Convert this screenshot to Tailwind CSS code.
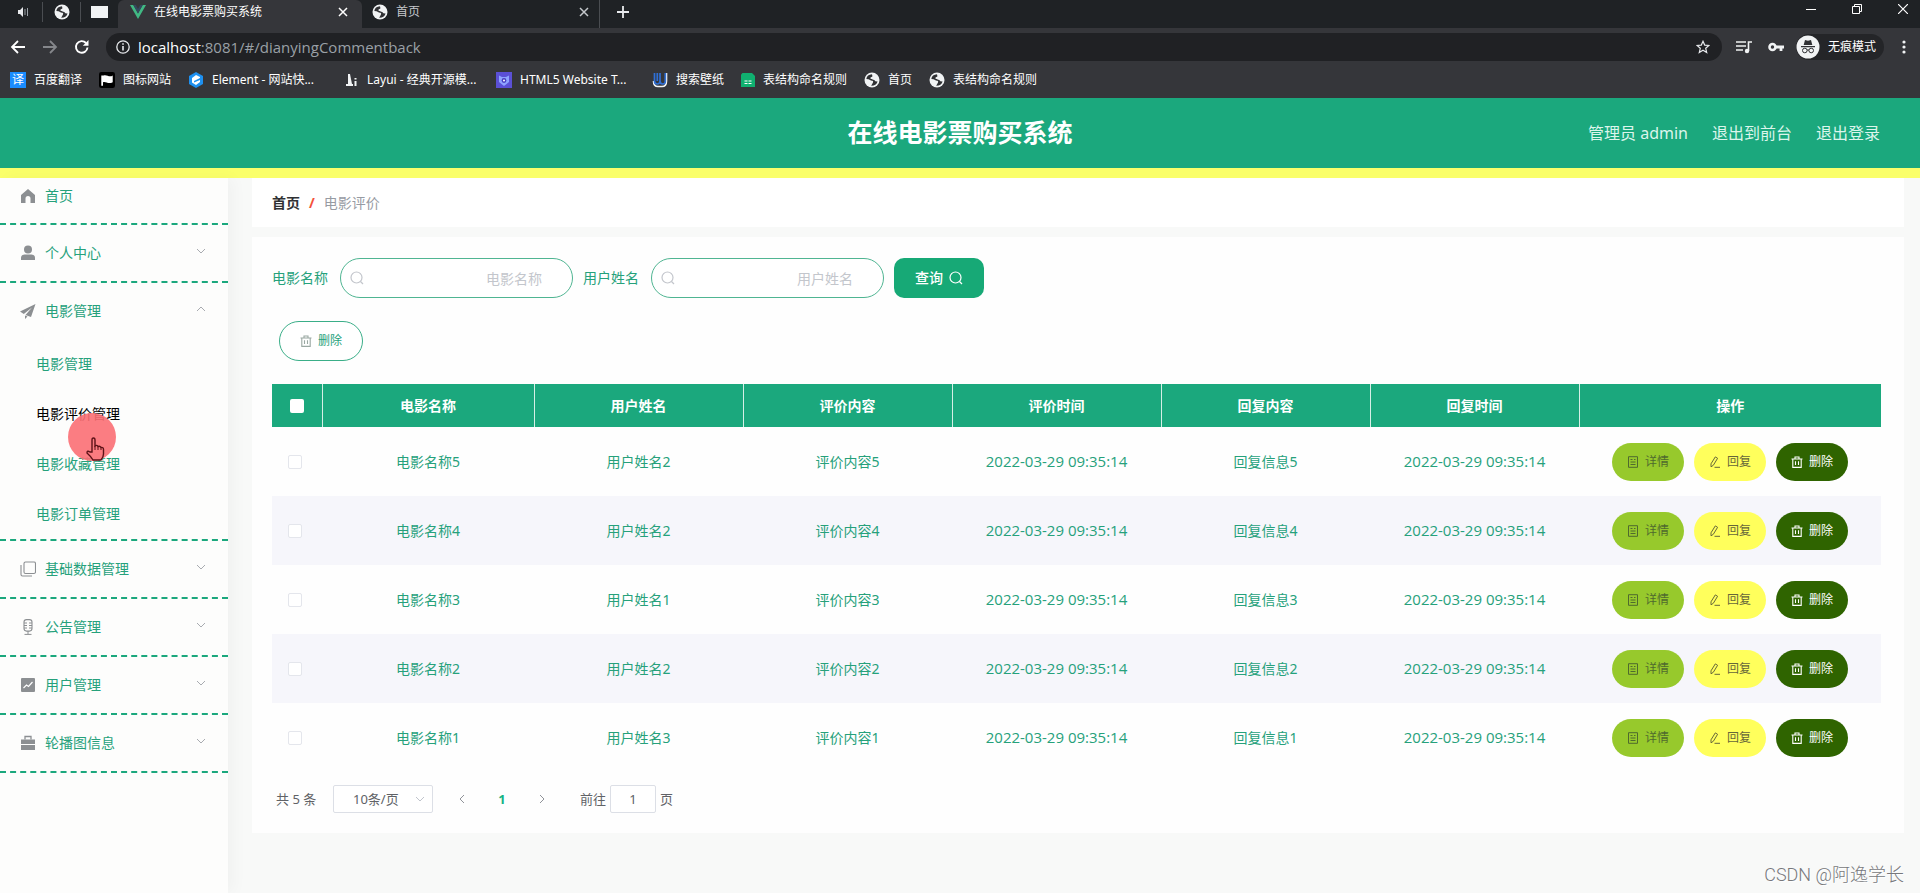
<!DOCTYPE html>
<html lang="zh-CN">
<head>
<meta charset="utf-8">
<title>在线电影票购买系统</title>
<script src="https://cdn.jsdelivr.net/npm/@tailwindcss/browser@4"></script>
</head>
<body class="flex min-h-screen flex-col bg-[#f8f9f8] font-['Noto_Sans','Noto_Sans_CJK_SC',sans-serif] text-sm text-[#26a17b]">

<svg class="hidden" aria-hidden="true">
  <symbol id="globe" viewBox="0 0 16 16"><circle cx="8" cy="8" r="7.5" fill="#f1f3f4"/><path d="M8 2.200Q3 2.500 2.300 7q2.700 0 3.700 1t2.500.8Q9.500 9 9 10.500L7.200 13.800Q12 14 13.600 9.500 11 9.600 10.300 8 9.500 6.500 7.500 7 6 7 6.500 5.500L8.500 4.500z" fill="#303134"/><path d="M7.500 5.500 9.500 4l3 2-2 2-2.500-.8zM3 8.500l2.500.5 1.500 2-.5 2.500Q3.500 12 3 8.500z" fill="#f1f3f4"/></symbol>
  <symbol id="search" viewBox="0 0 14 14"><circle cx="6.500" cy="6.500" r="5.500" fill="none" stroke="currentColor" stroke-width="1.200"/><path d="m10.500 10.500 2.500 2.500" stroke="currentColor" stroke-width="1.200"/></symbol>
  <symbol id="trash" viewBox="0 0 12 12"><path d="M.5 3h11M4 3V1h4v2M1.800 3v8.400h8.400V3M4.500 5.300v3.700M7.500 5.300v3.700" fill="none" stroke="currentColor" stroke-width="1.100"/></symbol>
  <symbol id="doc" viewBox="0 0 12 12"><path d="M1.500.7h9v10.600h-9zM3.500 3.500h2M3.500 6h5M3.500 8.500h5M7 3.500h1.500" fill="none" stroke="currentColor"/></symbol>
  <symbol id="edit" viewBox="0 0 12 12"><path d="M2 7.800 6.300.9l2.300 1.400-4.300 7L2 10.800zM5.500 11.300H11" fill="none" stroke="currentColor"/></symbol>
  <symbol id="down" viewBox="0 0 10 10"><path d="m1 3 4 4 4-4" fill="none" stroke="currentColor"/></symbol>
  <symbol id="x" viewBox="0 0 10 10"><path d="m1 1 8 8M9 1 1 9" stroke="currentColor" stroke-width="1.500"/></symbol>
</svg>

<!-- Browser window -->
<div class="bg-[#35363a] text-xs text-white">
  <div class="flex h-7 items-stretch bg-[#1f2225]">
    <div class="flex w-[118px] items-center pb-1 text-[#e8eaed]">
      <button class="flex w-[42px] justify-center pl-1" aria-label="静音"><svg class="size-3" viewBox="0 0 12 12"><path d="M1 4h2l3-3v10L3 8H1z" fill="currentColor"/><path d="M8 3v6M10.500 2v8" stroke="#9aa0a6"/></svg></button>
      <span class="h-5 w-px bg-[#4a4d51]"></span>
      <button class="flex flex-1 justify-center" aria-label="首页"><svg class="size-4"><use href="#globe"/></svg></button>
      <span class="h-5 w-px bg-[#4a4d51]"></span>
      <button class="flex flex-1 justify-center" aria-label="空白页"><span class="h-3 w-[17px] bg-[#f1f3f4]"></span></button>
    </div>
    <div class="flex w-[244px] items-center rounded-t-md bg-[#35363a] pr-2.5 pb-1 pl-3">
      <svg class="h-3.5 w-4 shrink-0" viewBox="0 0 16 14"><path d="M0 0h3.300L8 8.500 12.700 0H16L8 14z" fill="#41b883"/><path d="M3.300 0h2.500L8 4l2.200-4h2.500L8 8.500z" fill="#34495e"/></svg>
      <span class="ml-2 flex-1 truncate">在线电影票购买系统</span>
      <button class="p-1" aria-label="关闭标签"><svg class="size-2.5"><use href="#x"/></svg></button>
    </div>
    <div class="flex w-[238px] items-center border-r border-[#4a4d51] pr-1.5 pb-1 pl-2.5 text-[#c5c8cc]">
      <svg class="size-4 shrink-0"><use href="#globe"/></svg>
      <span class="ml-2 flex-1 truncate">首页</span>
      <button class="p-1" aria-label="关闭标签"><svg class="size-2.5"><use href="#x"/></svg></button>
    </div>
    <button class="px-4 pb-1" aria-label="新标签"><svg class="size-3.5" viewBox="0 0 14 14"><path d="M7 1v12M1 7h12" stroke="#e8eaed" stroke-width="1.800"/></svg></button>
    <div class="ml-auto flex items-center gap-9 pr-3 pb-2.5">
      <button aria-label="最小化"><svg class="size-2.5" viewBox="0 0 10 10"><path d="M0 5.500h10" stroke="#fff"/></svg></button>
      <button aria-label="还原"><svg class="size-2.5" viewBox="0 0 10 10"><path d="M.5 2.500h7v7h-7zM2.500 2.500v-2h7v7h-2" fill="none" stroke="#fff"/></svg></button>
      <button aria-label="关闭"><svg class="size-2.5" viewBox="0 0 10 10"><path d="m0 0 10 10M10 0 0 10" stroke="#fff" stroke-width="1.200"/></svg></button>
    </div>
  </div>
  <div class="flex h-[38px] items-center gap-4 px-2.5">
    <button aria-label="后退"><svg class="size-4" viewBox="0 0 16 16"><path d="M15 8H2M8 2 2 8l6 6" fill="none" stroke="#fff" stroke-width="1.800"/></svg></button>
    <button aria-label="前进"><svg class="size-4" viewBox="0 0 16 16"><path d="M1 8h13M8 2l6 6-6 6" fill="none" stroke="#85878b" stroke-width="1.800"/></svg></button>
    <button aria-label="刷新"><svg class="size-4" viewBox="0 0 16 16"><path d="M13.500 8.500A5.800 5.800 0 1 1 12 4" fill="none" stroke="#fff" stroke-width="1.900"/><path d="M14.500 1v5.800H8.800z" fill="#fff"/></svg></button>
    <div class="flex h-7 flex-1 items-center rounded-full bg-[#202124] pr-3 pl-2.5">
      <svg class="size-3.5" viewBox="0 0 14 14"><circle cx="7" cy="7" r="6.200" fill="none" stroke="#e8eaed" stroke-width="1.300"/><path d="M7 6v4.500M7 3.200v1.500" stroke="#e8eaed" stroke-width="1.600"/></svg>
      <span class="ml-2 flex-1 font-['Open_Sans'] text-[15px] text-[#9aa0a6]"><span class="text-white">localhost</span>:8081/#/dianyingCommentback</span>
      <button aria-label="收藏"><svg class="size-3.5" viewBox="0 0 14 14"><path d="m7 1.300 1.700 3.800 4.200.4-3.200 2.800 1 4.100L7 10.200l-3.700 2.200 1-4.100L1.100 5.500l4.200-.4z" fill="none" stroke="#e8eaed" stroke-width="1.200"/></svg></button>
    </div>
    <button class="-ml-0.5" aria-label="媒体"><svg class="h-3.5 w-4" viewBox="0 0 16 14"><path d="M0 2h10M0 6h10M0 10h7" stroke="#f1f3f4" stroke-width="1.600"/><path d="M12.500 11V2H16" fill="none" stroke="#f1f3f4" stroke-width="1.600"/><circle cx="11" cy="11" r="2.200" fill="#f1f3f4"/></svg></button>
    <button aria-label="密码"><svg class="h-3.5 w-4" viewBox="0 0 16 14"><circle cx="4.500" cy="7" r="3" fill="none" stroke="#f1f3f4" stroke-width="2.600"/><path d="M8 7h8M13 7v4" stroke="#f1f3f4" stroke-width="2.800"/></svg></button>
    <button class="-ml-1 flex h-[26px] items-center gap-2 rounded-full bg-[#242528] pr-2" aria-label="无痕模式">
      <svg class="size-6" viewBox="0 0 24 24"><circle cx="12" cy="12" r="11.500" fill="#f1f3f4"/><path d="M9 5l3 .8 3-.8 1.300 5H7.700zM5 11h14v1.200H5z" fill="#303134"/><circle cx="8.800" cy="15.500" r="2.300" fill="none" stroke="#303134"/><circle cx="15.200" cy="15.500" r="2.300" fill="none" stroke="#303134"/><path d="M11 15h2" stroke="#303134"/></svg>
      <span>无痕模式</span>
    </button>
    <button class="-ml-0.5 px-1" aria-label="菜单"><svg class="h-3.5 w-1" viewBox="0 0 4 14"><g fill="#f1f3f4"><circle cx="2" cy="2" r="1.600"/><circle cx="2" cy="7" r="1.600"/><circle cx="2" cy="12" r="1.600"/></g></svg></button>
  </div>
  <nav class="flex h-8 items-center gap-[17px] pb-1 pl-2.5" aria-label="书签">
    <a href="#" class="flex items-center gap-2"><span class="flex size-4 items-center justify-center bg-[#1a8cff] text-xs">译</span>百度翻译</a>
    <a href="#" class="flex items-center gap-2"><svg class="size-4" viewBox="0 0 14 14"><rect width="14" height="14" rx="2" fill="#000"/><path d="M2 3h2c3-1 5 2 8 0v6C8 11 6 8 3.500 9v3H2z" fill="#fff"/></svg>图标网站</a>
    <a href="#" class="flex w-[140px] items-center gap-2"><svg class="size-4 shrink-0" viewBox="0 0 16 16"><path d="m8 0 7 4v8l-7 4-7-4V4z" fill="#1e90f0"/><path d="M8 3 12 5v1L6 9v1.500l6-2.500v2L8 13l-4-2.500V6z" fill="#fff"/></svg><span class="whitespace-nowrap">Element - 网站快...</span></a>
    <a href="#" class="flex w-[134px] items-center gap-2"><svg class="size-3.5 shrink-0" viewBox="0 0 14 14"><path d="M3 1h2l2 10h1v2H1v-2h2zM9.500 5h2v1.500h-2zM9.500 8h2v5h-2z" fill="#f1f3f4"/></svg><span class="whitespace-nowrap">Layui - 经典开源模...</span></a>
    <a href="#" class="flex w-[139px] items-center gap-2"><svg class="size-4 shrink-0" viewBox="0 0 16 16"><rect width="16" height="16" fill="#5b50d6"/><path d="M3 3.500 6 5h4l3-1.500V10l-5 4-5-4z" fill="#8fa4ff"/><circle cx="8" cy="8.500" r="2.400" fill="#4a3fc0"/><circle cx="8" cy="8.500" r="1" fill="#fff"/></svg><span class="whitespace-nowrap">HTML5 Website T...</span></a>
    <a href="#" class="flex items-center gap-2"><svg class="size-4" viewBox="0 0 16 16"><path d="M1.500 9q0 5.500 4.500 5.500h4q4.500 0 4.500-5.500V1" fill="none" stroke="#f1f3f4" stroke-width="1.600"/><path d="M2.500 1v8q0 3 2.700 3T8 9V1M8 9q0 3 2.700 3t2.600-3V1M5.300 1v8" fill="none" stroke="#2f6fd6" stroke-width="1.700"/></svg>搜索壁纸</a>
    <a href="#" class="flex items-center gap-2"><svg class="size-3.5" viewBox="0 0 14 14"><path d="M1.500 0H11l3 3v11H0V1.500z" fill="#10b070"/><path d="M3.500 8h3M7.500 8h3M3.500 10.500h3M7.500 10.500h3" stroke="#fff" stroke-width="1.200"/></svg>表结构命名规则</a>
    <a href="#" class="flex items-center gap-2"><svg class="size-4"><use href="#globe"/></svg>首页</a>
    <a href="#" class="flex items-center gap-2"><svg class="size-4"><use href="#globe"/></svg>表结构命名规则</a>
  </nav>
</div>

<!-- Application header -->
<header class="grid h-20 grid-cols-[1fr_auto_1fr] items-center border-b-10 border-[#faff6a] bg-[#1ba87d] text-base text-[#dcf5ec]">
  <h1 class="col-start-2 text-[25px] font-bold text-white">在线电影票购买系统</h1>
  <div class="flex items-center justify-end gap-6 pr-10">
    <span>管理员 admin</span>
    <a href="#">退出到前台</a>
    <a href="#">退出登录</a>
  </div>
</header>

<div class="flex flex-1">
  <!-- Side menu -->
  <aside class="relative w-[228px] shrink-0 bg-[#fdfdfc] shadow-[6px_0_14px_#00000008]">
    <nav id="menu" aria-label="主菜单">
      <a href="#" class="flex h-[47px] items-center border-b-2 border-dashed border-[#1ba87d] pb-2.5 pl-5">
        <svg class="mr-[9px] size-4 text-[#8c8f92]" viewBox="0 0 16 16"><path d="M8 1 1 7v8h4.500v-4.500a2.500 2.500 0 0 1 5 0V15H15V7z" fill="currentColor"/></svg>首页</a>
      <button class="flex h-[58px] w-full items-center border-b-2 border-dashed border-[#1ba87d] pr-[22px] pl-5 text-left">
        <svg class="mr-[9px] size-4 text-[#8c8f92]" viewBox="0 0 16 16"><circle cx="8" cy="4.500" r="4" fill="currentColor"/><path d="M1 15v-2q0-3.500 3.500-3.500h7q3.500 0 3.500 3.500v2z" fill="currentColor"/></svg><span class="flex-1">个人中心</span><svg class="mb-1 size-2.5 text-[#a8abb0]"><use href="#down"/></svg></button>
      <div class="border-b-2 border-dashed border-[#1ba87d]">
        <button class="flex h-14 w-full items-center pr-[22px] pl-5 text-left" aria-expanded="true">
          <svg class="mr-[9px] size-4 text-[#8c8f92]" viewBox="0 0 16 16"><path d="M15.500 1 0 8.500 3.800 11 12 4.500 5.500 12l5.500 2zM5 12.500V16l2.500-2.600z" fill="currentColor"/></svg><span class="flex-1">电影管理</span><svg class="mb-1 size-2.5 rotate-180 text-[#a8abb0]"><use href="#down"/></svg></button>
        <a href="#" class="flex h-[50px] items-center pl-9">电影管理</a>
        <a href="#" class="flex h-[50px] items-center pl-9 text-black" aria-current="page">电影评价管理</a>
        <a href="#" class="flex h-[50px] items-center pl-9">电影收藏管理</a>
        <a href="#" class="flex h-[50px] items-center pl-9">电影订单管理</a>
      </div>
      <button class="flex h-[58px] w-full items-center border-b-2 border-dashed border-[#1ba87d] pr-[22px] pl-5 text-left">
        <svg class="mr-[9px] size-4 text-[#8c8f92]" viewBox="0 0 16 16"><rect x="4" y="1" width="11.500" height="11.500" rx="1.500" fill="none" stroke="currentColor" stroke-width="1.100"/><path d="M1 4v9.500q0 1.500 1.500 1.500H12" fill="none" stroke="currentColor" stroke-width="1.100"/></svg><span class="flex-1">基础数据管理</span><svg class="mb-1 size-2.5 text-[#a8abb0]"><use href="#down"/></svg></button>
      <button class="flex h-[58px] w-full items-center border-b-2 border-dashed border-[#1ba87d] pr-[22px] pl-5 text-left">
        <svg class="mr-[9px] size-4 text-[#8c8f92]" viewBox="0 0 16 16"><rect x="4" y=".6" width="8" height="11.500" rx="2.500" fill="none" stroke="currentColor" stroke-width="1.100"/><path d="M4 4h3M9 4h3M4 6.500h3M9 6.500h3M4 9h3M9 9h3M8 12v3M4.500 15.400h7" stroke="currentColor"/></svg><span class="flex-1">公告管理</span><svg class="mb-1 size-2.5 text-[#a8abb0]"><use href="#down"/></svg></button>
      <button class="flex h-[58px] w-full items-center border-b-2 border-dashed border-[#1ba87d] pr-[22px] pl-5 text-left">
        <svg class="mr-[9px] size-4 text-[#8c8f92]" viewBox="0 0 16 16"><rect x="1" y="1" width="14" height="14" rx="1" fill="currentColor"/><path d="m3.500 11 3-3 2 1.500 4-4.500" fill="none" stroke="#fff" stroke-width="1.200"/></svg><span class="flex-1">用户管理</span><svg class="mb-1 size-2.5 text-[#a8abb0]"><use href="#down"/></svg></button>
      <button class="flex h-[58px] w-full items-center border-b-2 border-dashed border-[#1ba87d] pr-[22px] pl-5 text-left">
        <svg class="mr-[9px] size-4 text-[#8c8f92]" viewBox="0 0 16 16"><path d="M5 4.500V1.500h6v3" fill="none" stroke="currentColor" stroke-width="1.300"/><path d="M1 4.500h14V9H1zM1 10h14v5H1z" fill="currentColor"/></svg><span class="flex-1">轮播图信息</span><svg class="mb-1 size-2.5 text-[#a8abb0]"><use href="#down"/></svg></button>
    </nav>
    <!-- Click marker and pointer -->
    <div class="absolute top-[235px] left-[68px] size-12 rounded-full bg-[#fb6f74]/90"></div>
    <svg class="absolute top-[259px] left-[85px] h-6 w-5" viewBox="0 0 20 24"><path d="M7 15V3q0-2 1.500-2T10 3v6q2-1.500 3 .5 2-1 3 1 2.500-.5 2.500 2V17q0 3-2.500 6H8q-2-3.500-6-7 0-3 3-1z" fill="#fb7b80" stroke="#5c1217" stroke-width="1.400"/><path d="M10 9v4M13 9.500V13M16 10.500V13" stroke="#5c1217"/></svg>
  </aside>

  <main class="min-w-0 flex-1 pr-4 pl-6">
    <nav class="flex h-[49px] items-center gap-[9px] bg-white pl-5" aria-label="面包屑">
      <a href="#" class="font-bold text-[#303133]">首页</a><span class="font-bold text-[#f4513b]">/</span><span class="text-[#979ba3]">电影评价</span>
    </nav>

    <section class="mt-2.5 bg-[#fefefe] pt-[21px] pr-[23px] pb-5 pl-5">
      <form class="flex items-center">
        <label for="film" class="mr-3">电影名称</label>
        <div class="relative mr-2.5">
          <input id="film" placeholder="电影名称" class="h-10 w-[233px] rounded-full border border-[#4fb592] bg-white pr-[30px] pl-8 text-right placeholder:text-[#c3c6cc]">
          <svg class="absolute top-[13px] left-2.5 size-3.5 text-[#c3c6cc]"><use href="#search"/></svg>
        </div>
        <label for="user" class="mr-3">用户姓名</label>
        <div class="relative mr-2.5">
          <input id="user" placeholder="用户姓名" class="h-10 w-[233px] rounded-full border border-[#4fb592] bg-white pr-[30px] pl-8 text-right placeholder:text-[#c3c6cc]">
          <svg class="absolute top-[13px] left-2.5 size-3.5 text-[#c3c6cc]"><use href="#search"/></svg>
        </div>
        <button type="button" class="flex h-10 w-[90px] items-center justify-center gap-1.5 rounded-[10px] bg-[#17a976] font-medium text-white">查询<svg class="size-3.5"><use href="#search"/></svg></button>
      </form>

      <button class="mt-[23px] ml-[7px] flex h-10 w-[84px] items-center justify-center gap-1.5 rounded-full border border-[#3aae88] bg-white text-xs"><svg class="size-3 text-[#9aa8a2]"><use href="#trash"/></svg>删除</button>

      <table class="mt-[23px] w-full table-fixed border-collapse text-center">
        <colgroup><col class="w-[50px]"><col class="w-[212px]"><col><col><col><col><col><col class="w-[302px]"></colgroup>
        <thead>
          <tr class="h-[43px] bg-[#1ba87d] text-white">
            <th class="border-r border-[#d6efe6]"><input type="checkbox" aria-label="全选" class="mx-auto block size-3.5 appearance-none rounded-xs bg-white"></th>
            <th class="border-r border-[#d6efe6]">电影名称</th>
            <th class="border-r border-[#d6efe6]">用户姓名</th>
            <th class="border-r border-[#d6efe6]">评价内容</th>
            <th class="border-r border-[#d6efe6]">评价时间</th>
            <th class="border-r border-[#d6efe6]">回复内容</th>
            <th class="border-r border-[#d6efe6]">回复时间</th>
            <th>操作</th>
          </tr>
        </thead>
        <tbody id="rows"></tbody>
      </table>

      <div class="mt-[13px] flex h-7 items-center text-[13px] text-[#606266]">
        <span class="ml-1 w-[57px]">共 5 条</span>
        <div class="relative">
          <select aria-label="每页条数" class="h-7 w-[100px] appearance-none rounded-xs border border-[#dcdfe6] bg-white pr-4 pl-[19px] text-[13px]"><option>10条/页</option></select>
          <svg class="absolute top-[9px] right-2 size-2.5 text-[#c0c4cc]"><use href="#down"/></svg>
        </div>
        <button class="ml-3 flex w-[34px] justify-center" aria-label="上一页"><svg class="size-2.5 rotate-90 text-[#909399]"><use href="#down"/></svg></button>
        <button class="w-[46px] font-bold text-[#17b384]" aria-current="page">1</button>
        <button class="flex w-[34px] justify-center" aria-label="下一页"><svg class="size-2.5 -rotate-90 text-[#909399]"><use href="#down"/></svg></button>
        <label for="page" class="ml-[21px]">前往</label>
        <input id="page" value="1" class="mx-1 h-7 w-[46px] rounded-xs border border-[#dcdfe6] bg-white text-center">
        <span>页</span>
      </div>
    </section>
  </main>
</div>

<div class="absolute right-4 bottom-1 font-['Roboto','Noto_Sans_CJK_SC',sans-serif] text-lg font-light text-[#77787c] [text-shadow:1px_1px_0_#fff]">CSDN @阿逸学长</div>

<script>
  const records = [[5, 2], [4, 2], [3, 1], [2, 2], [1, 3]];
  const time = '2022-03-29 09:35:14';
  document.getElementById('rows').innerHTML = records.map(([n, user]) => `
    <tr class="h-[69px] even:bg-[#f6f6fb]">
      <td><input type="checkbox" aria-label="选择第${n}条" class="ml-4 block size-3.5 appearance-none rounded-xs border border-[#e4e6ec] bg-white"></td>
      <td>电影名称${n}</td>
      <td>用户姓名${user}</td>
      <td>评价内容${n}</td>
      <td class="font-['Open_Sans'] text-[15px]">${time}</td>
      <td>回复信息${n}</td>
      <td class="font-['Open_Sans'] text-[15px]">${time}</td>
      <td>
        <div class="flex justify-center gap-2.5 text-xs">
          <button class="flex h-[38px] w-[72px] items-center justify-center gap-1.5 rounded-full bg-[#97c92c] text-[#4f6a2e]"><svg class="size-3"><use href="#doc"/></svg>详情</button>
          <button class="flex h-[38px] w-[72px] items-center justify-center gap-1.5 rounded-full bg-[#ffff5c] text-[#66663a]"><svg class="size-3"><use href="#edit"/></svg>回复</button>
          <button class="flex h-[38px] w-[72px] items-center justify-center gap-1.5 rounded-full bg-[#2f6400] text-white"><svg class="size-3"><use href="#trash"/></svg>删除</button>
        </div>
      </td>
    </tr>`).join('');
</script>
</body>
</html>
